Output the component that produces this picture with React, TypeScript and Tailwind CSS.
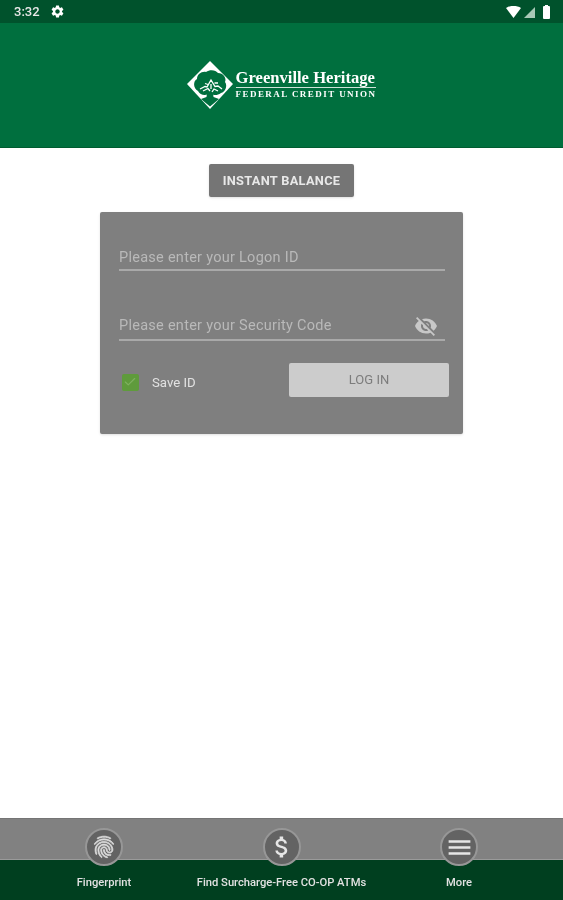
import { Check } from 'lucide-react';

const GEAR = 'M19.14 12.94c.04-.3.06-.61.06-.94 0-.32-.02-.64-.07-.94l2.03-1.58c.18-.14.23-.41.12-.61l-1.92-3.32c-.12-.22-.37-.29-.59-.22l-2.39.96c-.5-.38-1.03-.7-1.62-.94l-.36-2.54c-.04-.24-.24-.41-.48-.41h-3.84c-.24 0-.43.17-.47.41l-.36 2.54c-.59.24-1.13.57-1.62.94l-2.39-.96c-.22-.08-.47 0-.59.22L2.74 8.87c-.12.21-.08.47.12.61l2.03 1.58c-.05.3-.09.63-.09.94s.02.64.07.94l-2.03 1.58c-.18.14-.23.41-.12.61l1.92 3.32c.12.22.37.29.59.22l2.39-.96c.5.38 1.03.7 1.62.94l.36 2.54c.05.24.24.41.48.41h3.84c.24 0 .44-.17.47-.41l.36-2.54c.59-.24 1.13-.56 1.62-.94l2.39.96c.22.08.47 0 .59-.22l1.92-3.32c.12-.22.07-.47-.12-.61l-2.01-1.58zM12 15.6c-1.98 0-3.6-1.62-3.6-3.6s1.62-3.6 3.6-3.6 3.6 1.62 3.6 3.6-1.62 3.6-3.6 3.6z';
const EYE_OFF = 'M12 7c2.76 0 5 2.24 5 5 0 .65-.13 1.26-.36 1.83l2.92 2.92c1.51-1.26 2.7-2.89 3.43-4.75-1.73-4.39-6-7.5-11-7.5-1.4 0-2.74.25-3.98.7l2.16 2.16C10.74 7.13 11.35 7 12 7zM2 4.27l2.28 2.28.46.46C3.08 8.3 1.78 10.02 1 12c1.73 4.39 6 7.5 11 7.5 1.55 0 3.03-.3 4.38-.84l.42.42L19.73 22 21 20.73 3.27 3 2 4.27zM7.53 9.8l1.55 1.55c-.05.21-.08.43-.08.65 0 1.66 1.34 3 3 3 .22 0 .44-.03.65-.08l1.55 1.55c-.67.33-1.41.53-2.2.53-2.76 0-5-2.24-5-5 0-.79.2-1.53.53-2.2zm4.31-.78l3.15 3.15.02-.16c0-1.66-1.34-3-3-3l-.17.01z';
const FINGERPRINT = 'M17.81 4.47c-.08 0-.16-.02-.23-.06C15.66 3.42 14 3 12.01 3c-1.98 0-3.86.47-5.57 1.41-.24.13-.54.04-.68-.2-.13-.24-.04-.55.2-.68C7.82 2.52 9.86 2 12.01 2c2.13 0 3.99.47 6.03 1.52.25.13.34.43.21.67-.09.18-.26.28-.44.28zM3.5 9.72c-.1 0-.2-.03-.29-.09-.23-.16-.28-.47-.12-.7.99-1.4 2.25-2.5 3.75-3.27C9.98 4.04 14 4.03 17.15 5.65c1.5.77 2.76 1.86 3.75 3.25.16.22.11.54-.12.7-.23.16-.54.11-.7-.12-.9-1.26-2.04-2.25-3.39-2.94-2.87-1.47-6.54-1.47-9.4.01-1.36.7-2.5 1.7-3.4 2.96-.08.14-.23.21-.39.21zm6.25 12.07c-.13 0-.26-.05-.35-.15-.87-.87-1.34-1.43-2.01-2.64-.69-1.23-1.05-2.73-1.05-4.34 0-2.97 2.54-5.39 5.66-5.39s5.66 2.42 5.66 5.39c0 .28-.22.5-.5.5s-.5-.22-.5-.5c0-2.42-2.09-4.39-4.66-4.39s-4.66 1.97-4.66 4.39c0 1.44.32 2.77.93 3.85.64 1.15 1.08 1.64 1.85 2.42.19.2.19.51 0 .71-.11.1-.24.15-.37.15zm7.17-1.85c-1.19 0-2.24-.3-3.1-.89-1.49-1.01-2.38-2.65-2.38-4.39 0-.28.22-.5.5-.5s.5.22.5.5c0 1.41.72 2.74 1.94 3.56.71.48 1.54.71 2.54.71.24 0 .64-.03 1.04-.1.27-.05.53.13.58.41.05.27-.13.53-.41.58-.57.11-1.07.12-1.21.12zM14.91 22c-.04 0-.09-.01-.13-.02-1.59-.44-2.63-1.03-3.72-2.1-1.4-1.39-2.17-3.24-2.17-5.22 0-1.62 1.38-2.94 3.08-2.94s3.08 1.32 3.08 2.94c0 1.07.93 1.94 2.08 1.94s2.08-.87 2.08-1.94c0-3.77-3.25-6.83-7.25-6.83-2.84 0-5.44 1.58-6.61 4.03-.39.81-.59 1.76-.59 2.8 0 .78.07 2.01.67 3.61.1.26-.03.55-.29.64-.26.1-.55-.04-.64-.29-.49-1.31-.73-2.61-.73-3.96 0-1.2.23-2.29.68-3.24 1.33-2.79 4.28-4.6 7.51-4.6 4.55 0 8.25 3.51 8.25 7.83 0 1.62-1.38 2.94-3.08 2.94s-3.08-1.32-3.08-2.94c0-1.07-.93-1.94-2.08-1.94s-2.08.87-2.08 1.94c0 1.71.66 3.31 1.87 4.51.95.94 1.86 1.46 3.27 1.85.27.07.42.35.35.61-.05.23-.26.38-.47.38z';
const DOLLAR = 'M11.8 10.9c-2.27-.59-3-1.2-3-2.15 0-1.09 1.01-1.85 2.7-1.85 1.78 0 2.44.85 2.5 2.1h2.21c-.07-1.72-1.12-3.3-3.21-3.81V3h-3v2.16c-1.94.42-3.5 1.68-3.5 3.61 0 2.31 1.91 3.46 4.7 4.13 2.5.6 3 1.48 3 2.41 0 .69-.49 1.79-2.7 1.79-2.06 0-2.87-.92-2.98-2.1h-2.2c.12 2.19 1.76 3.42 3.68 3.83V21h3v-2.15c1.95-.37 3.5-1.5 3.5-3.55 0-2.84-2.43-3.81-4.7-4.4z';

function Icon({ d, size, className }: { d: string; size: number; className?: string }) {
  return (
    <svg width={size} height={size} viewBox="0 0 24 24" fill="currentColor" className={className}>
      <path d={d} />
    </svg>
  );
}

function Logo() {
  return (
    <div className="flex items-center gap-[3px]">
      <svg width="46" height="48" viewBox="0 0 46 48" className="shrink-0">
        <path d="M23 0 L46 23 L23 48 L0 23 Z" fill="#ffffff" />
        {/* crown */}
        <path d="M11 30 C6 27 6 20 10 18 C10 13 15 10 19 11 C23 8 29 9 31 12 C36 12 40 17 38 21 C41 25 38 31 34 32 C30 35 26 34 25 33 L21 33 C18 35 13 34 11 30 Z" fill="#006f3e" />
        {/* trunk */}
        <path d="M20 32 L26 32 L26.5 36 L32 38 L23 45.5 L14 38 L19.5 36 Z" fill="#006f3e" />
        {/* branches */}
        <path d="M13 28 L18 25.5 L20 26 L24 19 L28 25.5 L31 25 L35 28 M16 30 L21 27.5 L23 30 M31 30 L27 28 L25 31 M24 23 L24 28 M18 22.5 L21 23.5 M27.5 22 L31 22" fill="none" stroke="#ffffff" strokeWidth="1.3" />
      </svg>
      <div className="flex flex-col mb-[1px] font-['Liberation_Serif',serif] font-bold text-white">
        <p className="text-[16.6px] leading-[19px] whitespace-nowrap">Greenville Heritage</p>
        <div className="h-px bg-[#cfe3d8]" />
        <p className="text-[9px] leading-[13px] tracking-[1.45px] whitespace-nowrap">FEDERAL CREDIT UNION</p>
      </div>
    </div>
  );
}

function NavItem({ label, children }: { label: string; children: React.ReactNode }) {
  return (
    <div className="flex flex-col items-center gap-[10px] w-[177.5px]">
      <div className="flex items-center justify-center size-[38px] rounded-full bg-[#636363] border-2 border-[#979797] text-[#e6e6e6]">
        {children}
      </div>
      <span className="text-[11.2px] leading-[14px] font-medium text-[#e2e2e2] whitespace-nowrap">{label}</span>
    </div>
  );
}

export default function App() {
  return (
    <div className="flex flex-col h-[900px] w-[563px] bg-white font-['Roboto',sans-serif] overflow-hidden blur-[0.6px]">
      <div className="flex items-center justify-between h-[23px] pl-[14px] pr-[13px] bg-[#00522c] text-white">
        <div className="flex items-center gap-[10px]">
          <span className="text-[13px] font-medium text-[#e8e8e8]">3:32</span>
          <Icon d={GEAR} size={15} />
        </div>
        <div className="flex items-center gap-[2px]">
          {/* wifi */}
          <svg width="15" height="12" viewBox="0 0 15 12"><path d="M0 2 C4 -0.6 11 -0.6 15 2 L7.5 12 Z" fill="#ffffff" /></svg>
          {/* cell signal */}
          <svg width="11" height="11" viewBox="0 0 11 11" className="ml-[1px] mt-[1px]"><path d="M11 0 L11 11 L0 11 Z" fill="#a9c9b7" /></svg>
          {/* battery */}
          <div className="flex flex-col items-center ml-[6px]">
            <div className="w-[3px] h-[1.5px] bg-white" />
            <div className="w-[7px] h-[12.5px] rounded-[1px] bg-white" />
          </div>
        </div>
      </div>

      <div className="flex items-center justify-center h-[125px] bg-[#006f3e] border-b border-[#005c30]">
        <Logo />
      </div>

      <div className="flex-1 flex flex-col items-center pt-[16px]">
        <div className="flex items-center justify-center w-[145px] h-[33px] rounded-[2px] bg-[#757575] shadow-sm">
          <span className="text-[12.8px] font-bold text-[#e8e8e8] tracking-[0.3px]">INSTANT BALANCE</span>
        </div>

        <div className="flex flex-col w-[363px] h-[222px] mt-[15px] rounded-[2px] bg-[#7f7f7f] shadow-sm pl-[19px] pr-[14px] pt-[27px]">
          <div className="flex flex-col gap-[38px] pr-[4px]">
            <div className="flex items-end h-[32px] pb-[2px] border-b-2 border-[#a9a9a9]">
              <span className="text-[14.5px] leading-[18px] text-[#b9b9b9] tracking-[0.27px]">Please enter your Logon ID</span>
            </div>
            <div className="flex items-end h-[32px] pb-[1px] border-b-2 border-[#a9a9a9]">
              <div className="flex items-center justify-between w-full pr-[7px]">
                <span className="text-[14.5px] leading-[18px] text-[#b9b9b9] tracking-[0.27px]">Please enter your Security Code</span>
                <Icon d={EYE_OFF} size={24} className="text-[#c8c8c8]" />
              </div>
            </div>
          </div>
          <div className="flex items-center justify-between mt-[22px]">
            <div className="flex items-center gap-[13px] pl-[2.5px] mt-[5px]">
              <div className="flex items-center justify-center size-[17.5px] rounded-[2px] bg-[#5f9b3c]">
                <Check size={14} className="text-[#7fb060]" />
              </div>
              <span className="text-[13.2px] text-[#e2e2e2]">Save ID</span>
            </div>
            <div className="flex items-center justify-center w-[160px] h-[34px] rounded-[2px] bg-[#cccccc]">
              <span className="text-[13px] text-[#7c7c7c]">LOG IN</span>
            </div>
          </div>
        </div>
      </div>

      <div className="flex justify-center h-[82px] pt-[9px] bg-[linear-gradient(#818181_0,#818181_40px,#9a9a9a_40px,#9a9a9a_41px,#003f1f_41px)] border-t border-[#757575]">
        <NavItem label="Fingerprint"><Icon d={FINGERPRINT} size={26} className="text-[#dcdcdc] stroke-current stroke-[0.7px]" /></NavItem>
        <NavItem label="Find Surcharge-Free CO-OP ATMs"><Icon d={DOLLAR} size={28} /></NavItem>
        <NavItem label="More"><Icon d="M3 18h18v-2H3v2zm0-5h18v-2H3v2zm0-7v2h18V6H3z" size={29} /></NavItem>
      </div>
    </div>
  );
}
